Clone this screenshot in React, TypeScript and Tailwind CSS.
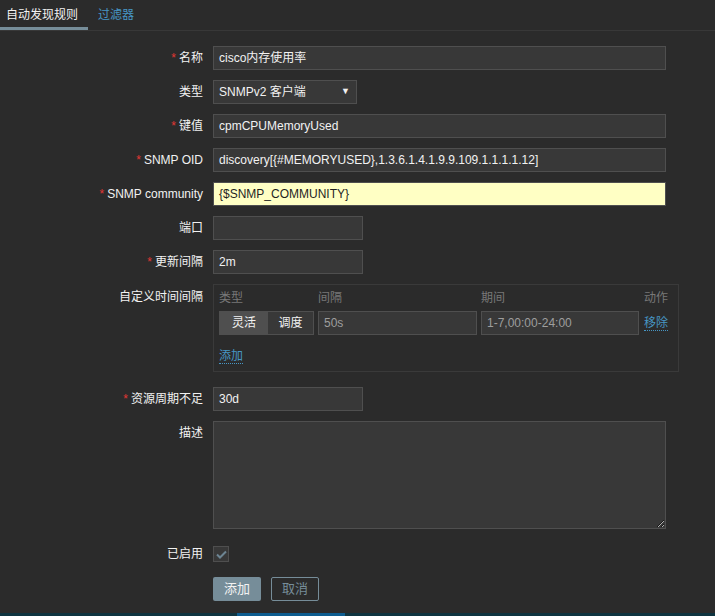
import React from "react";

const font = "font-['Liberation_Sans','Noto_Sans_CJK_SC',sans-serif]";

function Label({ text, required }: { text: string; required?: boolean }) {
  return (
    <div className="w-[213px] shrink-0 pr-[10px] text-right leading-[24px] text-[#f2f2f2]">
      {required && <span className="mr-[3px] text-[#e33734]">*</span>}
      {text}
    </div>
  );
}

function Input({ value, width, yellow }: { value: string; width: string; yellow?: boolean }) {
  return (
    <div
      className={`${width} h-[24px] border px-[5px] leading-[22px] whitespace-nowrap overflow-hidden ${
        yellow ? "bg-[#ffffc4] border-[#4f4f4f] text-[#1f1f1f]" : "bg-[#383838] border-[#4f4f4f] text-[#f2f2f2]"
      }`}
    >
      {value}
    </div>
  );
}

export default function App() {
  return (
    <div className={`${font} text-[12px] bg-[#2b2b2b] min-h-[616px] w-full flex flex-col`}>
      {/* tabs */}
      <div className="flex h-[31px] border-b border-[#383838]">
        <div className="w-[88px] border-b-[3px] border-[#768d99] pl-[6px] pt-[7px] text-[#f2f2f2] leading-[16px]">
          自动发现规则
        </div>
        <div className="pl-[10px] pt-[7px] text-[#4796c4] leading-[16px]">过滤器</div>
      </div>

      <div className="flex flex-col gap-[10px] pt-[15px]">
        <div className="flex">
          <Label text="名称" required />
          <Input value="cisco内存使用率" width="w-[453px]" />
        </div>
        <div className="flex">
          <Label text="类型" />
          <div className="w-[144px] h-[24px] bg-[#383838] border border-[#4f4f4f] pl-[5px] pr-[6px] flex items-center justify-between text-[#f2f2f2]">
            <span>SNMPv2 客户端</span>
            <span className="text-[9px]">▼</span>
          </div>
        </div>
        <div className="flex">
          <Label text="键值" required />
          <Input value="cpmCPUMemoryUsed" width="w-[453px]" />
        </div>
        <div className="flex">
          <Label text="SNMP OID" required />
          <Input value="discovery[{#MEMORYUSED},1.3.6.1.4.1.9.9.109.1.1.1.1.12]" width="w-[453px]" />
        </div>
        <div className="flex">
          <Label text="SNMP community" required />
          <Input value="{$SNMP_COMMUNITY}" width="w-[453px]" yellow />
        </div>
        <div className="flex">
          <Label text="端口" />
          <Input value="" width="w-[150px]" />
        </div>
        <div className="flex">
          <Label text="更新间隔" required />
          <Input value="2m" width="w-[150px]" />
        </div>
        <div className="flex">
          <div className="w-[213px] shrink-0 pr-[10px] text-right leading-[24px] text-[#f2f2f2] pt-[1px]">
            自定义时间间隔
          </div>
          <div className="w-[466px] border border-[#3a3a3a] pt-[4px] pb-[8px] px-[5px]">
            <div className="flex h-[18px] leading-[18px] text-[#787878]">
              <div className="w-[99px]">类型</div>
              <div className="w-[163px]">间隔</div>
              <div className="w-[163px]">期间</div>
              <div>动作</div>
            </div>
            <div className="flex items-center mt-[4px]">
              <div className="flex h-[24px] w-[95px] border border-[#4f4f4f] text-[#f2f2f2]">
                <div className="w-[48px] bg-[#4f4f4f] flex items-center justify-center">灵活</div>
                <div className="flex-1 bg-[#383838] flex items-center justify-center">调度</div>
              </div>
              <div className="ml-[4px] w-[159px] h-[24px] bg-[#383838] border border-[#4f4f4f] px-[5px] leading-[22px] text-[#9e9e9e]">
                50s
              </div>
              <div className="ml-[4px] w-[158px] h-[24px] bg-[#383838] border border-[#4f4f4f] px-[5px] leading-[22px] text-[#9e9e9e]">
                1-7,00:00-24:00
              </div>
              <span className="ml-[5px] text-[#4796c4] border-b border-dotted border-[#4796c4] leading-[14px]">移除</span>
            </div>
            <div className="mt-[12px] h-[16px]">
              <span className="text-[#4796c4] border-b border-dotted border-[#4796c4] leading-[14px]">添加</span>
            </div>
          </div>
        </div>
        <div className="flex mt-[5px]">
          <Label text="资源周期不足" required />
          <Input value="30d" width="w-[150px]" />
        </div>
        <div className="flex">
          <Label text="描述" />
          <textarea
            className="w-[453px] h-[108px] bg-[#383838] border border-[#4f4f4f] text-[#f2f2f2] outline-none"
            defaultValue=""
          />
        </div>
        <div className="flex items-center mt-[3px]">
          <Label text="已启用" />
          <div className="w-[16px] h-[16px] bg-[#383838] border border-[#4f4f4f] flex items-center justify-center">
            <svg width="11" height="9" viewBox="0 0 11 9">
              <polyline points="1,4.5 4,7.5 10,1.5" fill="none" stroke="#6d8593" strokeWidth="2" />
            </svg>
          </div>
        </div>
        <div className="flex mt-[1px]">
          <div className="w-[213px] shrink-0" />
          <div className="w-[48px] h-[24px] bg-[#768d99] rounded-[2px] flex items-center justify-center text-[#f2f2f2] text-[13px]">
            添加
          </div>
          <div className="ml-[10px] w-[48px] h-[24px] border border-[#768d99] rounded-[2px] flex items-center justify-center text-[#768d99] text-[13px]">
            取消
          </div>
        </div>
      </div>

      <div className="mt-auto h-[3px] bg-[#0f3440] flex">
        <div className="ml-[237px] w-[108px] bg-[#0d5c8f]" />
      </div>
    </div>
  );
}
